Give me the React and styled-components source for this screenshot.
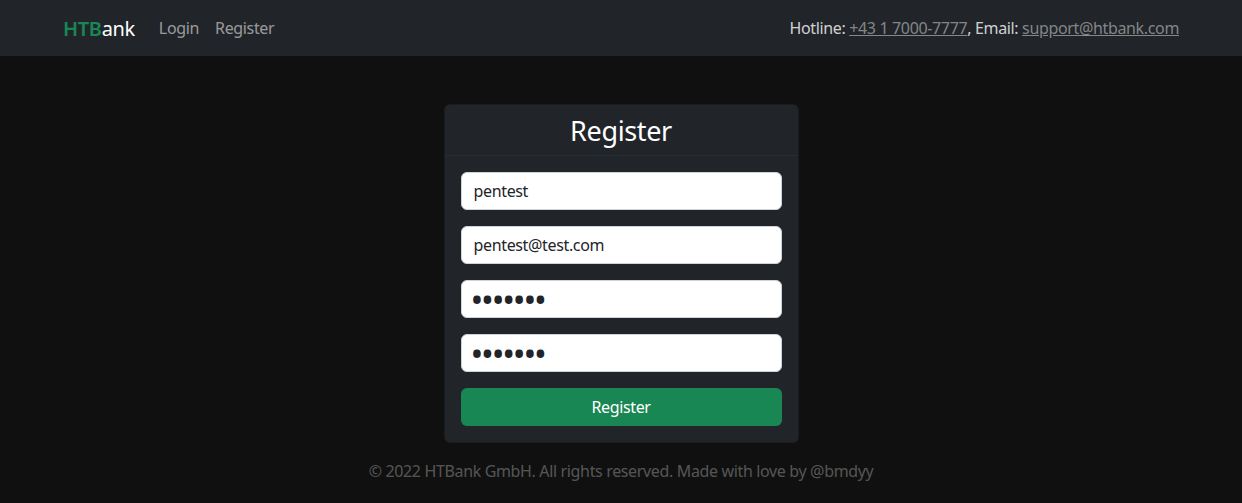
import React, { useState } from "react";
import styled, { createGlobalStyle } from "styled-components";

const GlobalStyle = createGlobalStyle`
  * { box-sizing: border-box; }
  body {
    margin: 0;
    background: #101010;
    font-family: "Noto Sans", "DejaVu Sans", sans-serif;
    font-size: 16px;
    letter-spacing: -0.35px;
    color: #dee2e6;
  }
`;

const Navbar = styled.nav`
  height: 56px;
  background: #212529;
  display: flex;
  align-items: center;
`;

const NavContainer = styled.div`
  width: 1140px;
  margin: 0 auto;
  padding: 0 12px;
  display: flex;
  align-items: center;
`;

const Brand = styled.a`
  font-size: 20px;
  color: #fff;
  text-decoration: none;
  margin-right: 16px;
  span { color: #198754; font-weight: 600; }
`;

const NavLink = styled.a`
  color: rgba(255, 255, 255, 0.55);
  text-decoration: none;
  padding: 8px;
`;

const Contact = styled.div`
  margin-left: auto;
  color: rgba(255, 255, 255, 0.8);
  a { color: rgba(255, 255, 255, 0.45); }
`;

const Main = styled.main`
  display: flex;
  flex-direction: column;
  align-items: center;
  padding-top: 48px;
`;

const Card = styled.div`
  width: 355px;
  background: #212529;
  border: 1px solid rgba(0, 0, 0, 0.2);
  border-radius: 6px;
`;

const CardHeader = styled.div`
  height: 51px;
  display: flex;
  align-items: center;
  justify-content: center;
  border-bottom: 1px solid rgba(255, 255, 255, 0.04);
  font-size: 27px;
  color: #fff;
`;

const Form = styled.form`
  padding: 16px;
  display: flex;
  flex-direction: column;
  gap: 16px;
`;

const Input = styled.input`
  height: 38px;
  width: 100%;
  padding: 6px 12px;
  border: 1px solid #ced4da;
  border-radius: 6px;
  background: #fff;
  color: #212529;
  font-family: inherit;
  font-size: 16px;
  letter-spacing: -0.35px;
  outline: none;

  &[type="password"] {
    padding: 0 9px;
    font-size: 34px;
    letter-spacing: -2.2px;
  }
`;

const Button = styled.button`
  height: 38px;
  border: none;
  border-radius: 6px;
  background: #198754;
  color: #fff;
  font-family: inherit;
  font-size: 16px;
  letter-spacing: -0.35px;
  cursor: pointer;
`;

const Footer = styled.footer`
  margin-top: 17px;
  color: rgba(255, 255, 255, 0.3);
  text-align: center;
`;

const App = () => {
  const [form, setForm] = useState({
    username: "pentest",
    email: "pentest@test.com",
    password: "1234567",
    confirm: "1234567",
  });

  const handleChange = (e) => {
    const { name, value } = e.target;
    setForm({ ...form, [name]: value });
  };

  return (
    <>
      <GlobalStyle />
      <Navbar>
        <NavContainer>
          <Brand href="#">
            <span>HTB</span>ank
          </Brand>
          <NavLink href="#">Login</NavLink>
          <NavLink href="#">Register</NavLink>
          <Contact>
            Hotline: <a href="#">+43 1 7000-7777</a>, Email:{" "}
            <a href="#">support@htbank.com</a>
          </Contact>
        </NavContainer>
      </Navbar>
      <Main>
        <Card>
          <CardHeader>Register</CardHeader>
          <Form onSubmit={(e) => e.preventDefault()}>
            <Input name="username" value={form.username} onChange={handleChange} />
            <Input name="email" value={form.email} onChange={handleChange} />
            <Input type="password" name="password" value={form.password} onChange={handleChange} />
            <Input type="password" name="confirm" value={form.confirm} onChange={handleChange} />
            <Button type="submit">Register</Button>
          </Form>
        </Card>
        <Footer>© 2022 HTBank GmbH. All rights reserved. Made with love by @bmdyy</Footer>
      </Main>
    </>
  );
};

export default App;
